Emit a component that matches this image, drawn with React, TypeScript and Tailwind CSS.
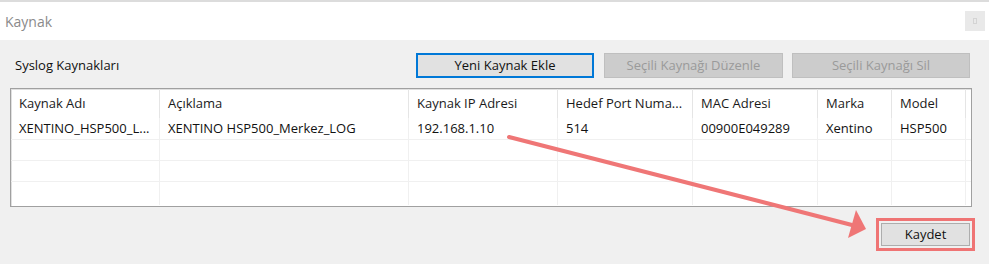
import React from "react";

const cols = [
  { w: 149, h: "Kaynak Adı", v: "XENTINO_HSP500_L..." },
  { w: 249, h: "Açıklama", v: "XENTINO HSP500_Merkez_LOG" },
  { w: 149, h: "Kaynak IP Adresi", v: "192.168.1.10" },
  { w: 135, h: "Hedef Port Numa...", v: "514" },
  { w: 125, h: "MAC Adresi", v: "00900E049289" },
  { w: 74, h: "Marka", v: "Xentino" },
  { w: 74, h: "Model", v: "HSP500" },
];

function Row({ h, cells, header }: { h: number; cells: (string | null)[]; header?: boolean }) {
  return (
    <div className={"flex " + (header ? "" : "border-b border-[#f0f0f0]")} style={{ height: h }}>
      {cols.map((c, i) => (
        <div
          key={i}
          className={"shrink-0 border-r flex items-center pl-[8px] whitespace-nowrap overflow-hidden " + (header ? "border-[#e5e5e5] text-[#1a1a1a]" : "border-[#f0f0f0] text-[#111]")}
          style={{ width: c.w }}
        >
          {cells[i]}
        </div>
      ))}
      <div className="flex-1" />
    </div>
  );
}

export default function App() {
  return (
    <div
      className="relative w-[989px] h-[264px] bg-[#f0f0f0] flex flex-col overflow-hidden text-[13px]"
      style={{ fontFamily: '"Open Sans", "Noto Sans", sans-serif' }}
    >
      <div className="h-[40px] bg-white border-t-2 border-[#dcdcdc] flex items-center justify-between pl-[5px] pr-[4px]">
        <span className="text-[#8a8a8a] text-[14px]">Kaynak</span>
        <div className="w-[20px] h-[20px] bg-[#e9e9e9] flex items-center justify-center">
          <div className="w-[4px] h-[6px] border border-[#d4d4d4]" />
        </div>
      </div>

      <div className="flex items-center h-[25px] mt-[13px] pl-[15px]">
        <span className="text-[#111] text-[13px] flex-1">Syslog Kaynakları</span>
        <button className="w-[178px] h-[25px] bg-[#e1e1e1] border-2 border-[#0078d7] text-[#111] text-[13px]">
          Yeni Kaynak Ekle
        </button>
        <button className="ml-[10px] w-[179px] h-[25px] bg-[#cccccc] border border-[#bfbfbf] text-[#9a9a9a] text-[13px]">
          Seçili Kaynağı Düzenle
        </button>
        <button className="ml-[9px] mr-[19px] w-[178px] h-[25px] bg-[#cccccc] border border-[#bfbfbf] text-[#9a9a9a] text-[13px]">
          Seçili Kaynağı Sil
        </button>
      </div>

      <div className="ml-[10px] mt-[10px] w-[962px] h-[119px] bg-white border border-[#a0a0a0] shadow-[inset_1px_1px_0_#e0e0e0]">
        <Row h={29} header cells={cols.map((c) => c.h)} />
        <Row h={22} cells={cols.map((c) => c.v)} />
        <Row h={21} cells={cols.map(() => null)} />
        <Row h={21} cells={cols.map(() => null)} />
        <div className="flex h-[23px]">
          {cols.map((c, i) => (
            <div key={i} className="shrink-0 border-r border-[#f0f0f0]" style={{ width: c.w }} />
          ))}
        </div>
      </div>

      <div className="flex justify-end mt-[11px] pr-[14px]">
        <div className="w-[99px] h-[33px] border-[3px] border-[#ef7474] p-[2px]">
          <button className="w-full h-full bg-[#e1e1e1] border border-[#adadad] text-[#111] text-[13px]">
            Kaydet
          </button>
        </div>
      </div>

      <svg className="absolute left-0 top-0 pointer-events-none" width="989" height="264">
        <line x1="509" y1="137" x2="852" y2="225" stroke="#ef7676" strokeWidth="4" strokeLinecap="round" />
        <polygon points="866,229 848,238 856,210" fill="#ef7676" />
      </svg>
    </div>
  );
}
